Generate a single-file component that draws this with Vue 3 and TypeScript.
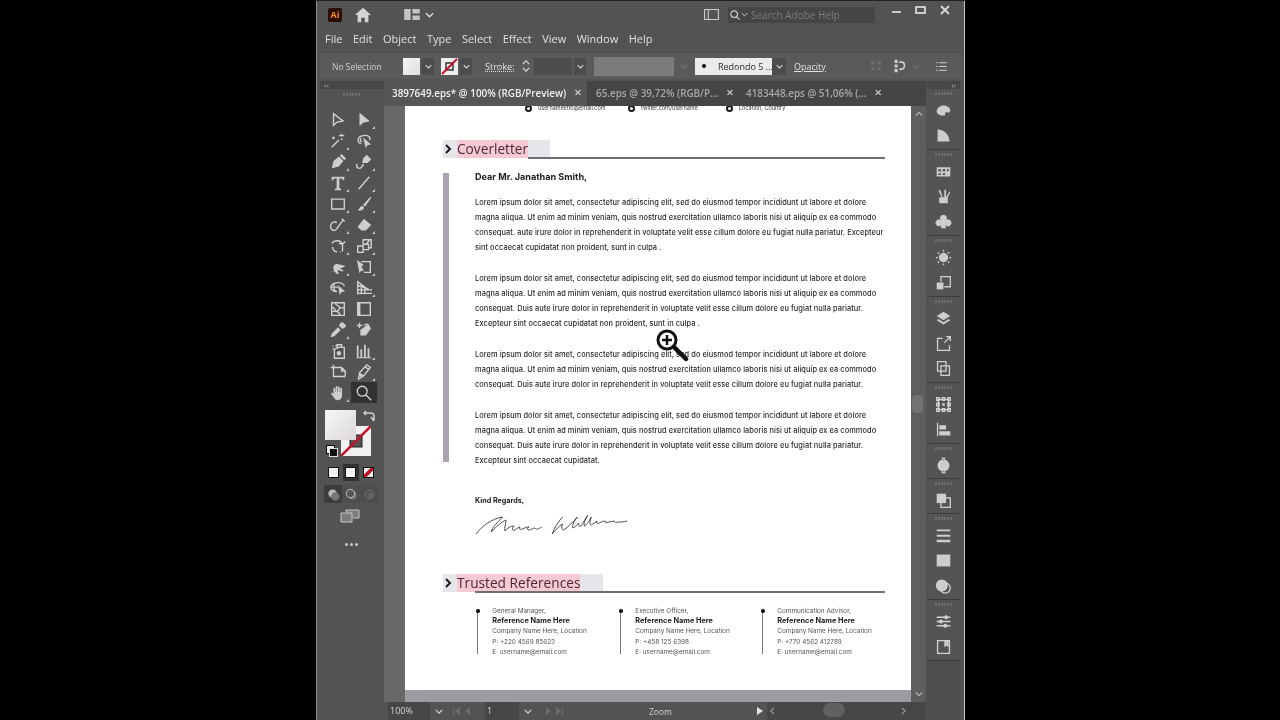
<script setup lang="ts">
interface Icon {
  s?: string
  f?: string
  corner?: boolean
  active?: boolean
}

const menus = ['File', 'Edit', 'Object', 'Type', 'Select', 'Effect', 'View', 'Window', 'Help']

const tools: Icon[] = [
  { s: 'M5 3v13l3.5-3.5 7-1.5z' },
  { f: 'M5 2v15l4-4 7.5-1.5z', corner: true },
  { s: 'M3 17L11 9M14 2v3M11 4h6M14 7v2M5 5v3M3.5 6.5h3', corner: true },
  { s: 'M7 13C2 12 2 5 9 4c6-1 9 2 7 5M7 7c-2 1-1 4 1 4', f: 'M9 6l9 8-4 .5-2 3.5z' },
  { f: 'M3 17l2-8 6-5 5 5-5 6zM12 3l2-2 5 5-2 2z', corner: true },
  { s: 'M2 12c-1 5 3 6 5 4 2-2 1-3 3-3', f: 'M8 11l1-5 4-4 5 5-4 4z', corner: true },
  { f: 'M3 3h14v4h-1.500c-.3-1.500-1-2-2.500-2h-1.500v10c0 1 .6 1.300 2 1.400V18H6.500v-1.600c1.400-.1 2-.4 2-1.400V5H7C5.500 5 4.800 5.500 4.500 7H3z', corner: true },
  { s: 'M4 17L16 3', corner: true },
  { s: 'M3 4.500h14v11H3z', corner: true },
  { f: 'M17 2l1 1-7 10-2-2zM8 12l2 2c0 3-4 4-7 3 2-1 2-4 5-5z', corner: true },
  { s: 'M16 4L8 15M14.500 3l3 3M7.700 15.500c-3 1.500-6-.5-6-4 0-4 4-6 7-4', corner: true },
  { f: 'M10 3l8 7-6 6H7l-4-4z', corner: true },
  { s: 'M3 7c3-4 10-4 12 1v8M15 8l3-3M15 8l-4-1M4 11c0 3 2 5 5 5.500M12 16.500l1 0', corner: true },
  { s: 'M9 8h6v6H9zM3 10h6v7H3zM9 8V3h9v9h-3M12 8l4-4', corner: true },
  { f: 'M2 15c3 1 4-1 3-3-1-3 2-6 5-5 3 0 5 2 8 1-1 3-4 3-6 3 2 1 3 3 5 3-2 2-5 0-7-1-1 2 1 3 1 5-4 0-4-3-5-3z', corner: true },
  { f: 'M2 2l8 6-3 1 3 6-3-1-2 3z', s: 'M7 4h10v12H10M17 4v12', corner: true },
  { s: 'M2 9c0-3 4-5 8-5s7 2 7 4M2 9c0 3 3 5 7 5M2 9h8M6 4.500c-1 3-1 7 1 9', f: 'M10 7l8 7-4 .5-2 3.500z' },
  { s: 'M3 2v15M3 3l8 6v8M3 7l12 4M3 12h16M3 16h16M7 5v12', corner: true },
  { s: 'M3 3h14v14H3zM3 8c4 0 3 4 6 5s3 4 3 4M7 3c0 3 3 3 5 5s5 0 5 0M3 13c2 0 3-2 6 0M12 8c0 2-1 3-3 5' },
  { f: 'M3 3h3v14H3z', s: 'M3 3h14v14H3z' },
  { f: 'M2 18l1-4 7-7 3 3-7 7zM11 5l2-3c1-1 2-1 3 0l2 2c1 1 1 2 0 3l-3 2z', corner: true },
  { s: 'M2 5l6 0M5 2v6M10 5c3-3 6-1 5 2l-3 1', f: 'M6 10l8-6 4 4-6 8H6z' },
  { s: 'M8 3v2M4 5h1M4 8h1M11 6h6v12H6V8l5-2zM9 3h5v3H9z', f: 'M11 10a2.500 2.500 0 1 0 .01 0z' },
  { f: 'M2 4h2v13H2zM6 8h2v9H6zM10 3h2v14h-2zM14 7h2v10h-2zM2 17h16v1H2z', corner: true },
  { s: 'M5 2v13h13M2 5h12l4 4v6M14 5v4h4' },
  { s: 'M4 18l1-7 8-9 4 3-7 9zM11 4l4 3', f: 'M5 14l1-3 4 3-3 2z', corner: true },
  { f: 'M5 11V5c0-1 2-1 2 0v4h.5V3c0-1 2-1 2 0v6h.5V3.500c0-1 2-1 2 0V9h.5V5c0-1 2-1 2 0v8c0 3-2 5-5 5-2 0-3-1-4-3l-3-4c-1-1 .5-2 1.500-1z', corner: true },
  { s: 'M8 8m-5.500 0a5.500 5.500 0 1 0 11 0a5.500 5.500 0 1 0-11 0M12 12l6 6', active: true },
]

const panelGroups: Icon[][] = [
  [
    { f: 'M10 4c5 0 8 3 8 6 0 2-2 3-4 2-2 0-3 1-2 2 0 2-1 2-3 2-4 0-7-2-7-5 0-4 4-7 8-7z' },
    { f: 'M3 3c8 0 14 6 14 14H3z' },
  ],
  [
    { f: 'M2 5h16v11H2zM4 7v3h3V7zM9 7v3h3V7zM14 7v3h2V7zM4 12v2h3v-2zM9 12v2h3v-2z' },
    { f: 'M5 11h10v7H5zM8 11L4 3l2-1 3 8zM11 11V2h2v9zM13 11l4-7 1 1-3 6z' },
    { f: 'M10 2a4 4 0 0 1 3.500 6 4 4 0 1 1-1 6.500L13 18H7l.5-3.500a4 4 0 1 1-1-6.500A4 4 0 0 1 10 2z' },
  ],
  [
    { f: 'M10 4.500a5.500 5.500 0 1 0 .01 0zM10 1a1 1 0 1 0 .01 0zM10 17a1 1 0 1 0 .01 0zM2 9a1 1 0 1 0 .01 0zM18 9a1 1 0 1 0 .01 0zM4 3.500a1 1 0 1 0 .01 0zM16 3.500a1 1 0 1 0 .01 0zM4 14.500a1 1 0 1 0 .01 0zM16 14.500a1 1 0 1 0 .01 0z' },
    { s: 'M7 9V3h11v12h-7', f: 'M2 10h8v8H2z' },
  ],
  [
    { f: 'M10 2l8 5-8 5-8-5zM4 10.500l6 3.800 6-3.800 2 1.500-8 5-8-5z' },
    { s: 'M9 4H3v14h14v-6M11 9l7-7M13 2h5v5' },
    { s: 'M3 2h10v11H3zM7 7h10v11H7z' },
  ],
  [
    { s: 'M4 4h12v12H4z M2 2h3v3H2zM15 2h3v3h-3zM2 15h3v3H2zM15 15h3v3h-3zM8.500 2h3v3h-3zM8.500 15h3v3h-3zM2 8.500h3v3H2zM15 8.500h3v3h-3z', f: 'M8.500 8.500h3v3h-3z' },
    { s: 'M3 2v16', f: 'M5 5h8v5H5zM5 12h13v5H5z' },
  ],
  [{ f: 'M10 3a7 7 0 1 0 .01 0zM7 1h6l-3 3zM7 19h6l-3-3z' }],
  [{ s: 'M7 7h11v11H7z', f: 'M2 2h11v11H2z' }],
  [
    { f: 'M2 3h16v2H2zM2 9h16v2.500H2zM2 15h16v3H2z' },
    { f: 'M2 3h16v14H2z' },
    { f: 'M8 3a7 7 0 1 0 .01 0z', s: 'M12 7a6 6 0 1 0 .01 0z' },
  ],
  [
    { s: 'M2 5h16M2 10h16M2 15h16M13 3.500a1.500 1.500 0 1 0 .01 0zM7 8.500a1.500 1.500 0 1 0 .01 0zM12 13.500a1.500 1.500 0 1 0 .01 0z' },
    { s: 'M3 3h14v15H3z', f: 'M11 3h5v8l-2.500-2-2.500 2z' },
  ],
]

const paragraphs: string[][] = [
  [
    'Lorem ipsum dolor sit amet, consectetur adipiscing elit, sed do eiusmod tempor incididunt ut labore et dolore',
    'magna aliqua. Ut enim ad minim veniam, quis nostrud exercitation ullamco laboris nisi ut aliquip ex ea commodo',
    'consequat. aute irure dolor in reprehenderit in voluptate velit esse cillum dolore eu fugiat nulla pariatur. Excepteur',
    'sint occaecat cupidatat non proident, sunt in culpa .',
  ],
  [
    'Lorem ipsum dolor sit amet, consectetur adipiscing elit, sed do eiusmod tempor incididunt ut labore et dolore',
    'magna aliqua. Ut enim ad minim veniam, quis nostrud exercitation ullamco laboris nisi ut aliquip ex ea commodo',
    'consequat. Duis aute irure dolor in reprehenderit in voluptate velit esse cillum dolore eu fugiat nulla pariatur.',
    'Excepteur sint occaecat cupidatat non proident, sunt in culpa .',
  ],
  [
    'Lorem ipsum dolor sit amet, consectetur adipiscing elit, sed do eiusmod tempor incididunt ut labore et dolore',
    'magna aliqua. Ut enim ad minim veniam, quis nostrud exercitation ullamco laboris nisi ut aliquip ex ea commodo',
    'consequat. Duis aute irure dolor in reprehenderit in voluptate velit esse cillum dolore eu fugiat nulla pariatur.',
  ],
  [
    'Lorem ipsum dolor sit amet, consectetur adipiscing elit, sed do eiusmod tempor incididunt ut labore et dolore',
    'magna aliqua. Ut enim ad minim veniam, quis nostrud exercitation ullamco laboris nisi ut aliquip ex ea commodo',
    'consequat. Duis aute irure dolor in reprehenderit in voluptate velit esse cillum dolore eu fugiat nulla pariatur.',
    'Excepteur sint occaecat cupidatat.',
  ],
]

const references = [
  { role: 'General Manager,', phone: 'P: +220 4569 85623' },
  { role: 'Executive Officer,', phone: 'P: +458 125 6398' },
  { role: 'Communication Advisor,', phone: 'P: +770 4562 412789' },
]
</script>

<template>
  <div class="stage">
    <div class="window">
      <header class="titlebar">
        <div class="ai-logo">Ai</div>
        <svg class="home" viewBox="0 0 20 20"><path d="M10 2l9 8h-3v8h-4v-5H8v5H4v-8H1z" /></svg>
        <svg class="workspace-icon" viewBox="0 0 17 12"><path d="M0 0h7v12H0zM9 0h8v5H9zM9 7h8v5H9z" /></svg>
        <svg class="chev top-chev" viewBox="0 0 10 6"><path d="M1 1l4 4 4-4" /></svg>
        <div class="title-spacer"></div>
        <svg class="arrange" viewBox="0 0 16 12"><path d="M.5.5h15v11H.5zM.5.5h4v11h-4z" /></svg>
        <div class="search">
          <svg viewBox="0 0 12 12"><path d="M5 1a4 4 0 1 0 .01 0zM8 8l3.500 3.500" /></svg>
          <svg class="search-chev" viewBox="0 0 10 6"><path d="M1 1l4 4 4-4" /></svg>
          <span>Search Adobe Help</span>
        </div>
        <div class="win-btns">
          <i class="win-min"></i>
          <i class="win-max"></i>
          <svg viewBox="0 0 10 10"><path d="M1 1l8 8M9 1l-8 8" /></svg>
        </div>
      </header>

      <nav class="menubar">
        <span v-for="m in menus" :key="m">{{ m }}</span>
      </nav>

      <section class="controlbar">
        <span class="no-sel">No Selection</span>
        <div class="swatch fill-swatch"></div>
        <div class="drop"><svg class="chev" viewBox="0 0 10 6"><path d="M1 1l4 4 4-4" /></svg></div>
        <div class="swatch stroke-swatch">
          <svg viewBox="0 0 17 17"><rect x="5" y="5" width="7" height="7" fill="none" stroke="#333" stroke-width="1.500" /><path d="M1 16L16 1" stroke="#c4122a" stroke-width="2" /></svg>
        </div>
        <div class="drop"><svg class="chev" viewBox="0 0 10 6"><path d="M1 1l4 4 4-4" /></svg></div>
        <span class="stroke-label">Stroke:</span>
        <div class="spinner">
          <svg class="chev" viewBox="0 0 10 6"><path d="M1 5l4-4 4 4" /></svg>
          <svg class="chev" viewBox="0 0 10 6"><path d="M1 1l4 4 4-4" /></svg>
        </div>
        <div class="stroke-field"></div>
        <div class="drop"><svg class="chev" viewBox="0 0 10 6"><path d="M1 1l4 4 4-4" /></svg></div>
        <div class="dash-field"></div>
        <svg class="chev dim-chev" viewBox="0 0 10 6"><path d="M1 1l4 4 4-4" /></svg>
        <div class="brush"><b class="brush-dot"></b><span>Redondo 5 ...</span></div>
        <div class="drop brush-drop"><svg class="chev" viewBox="0 0 10 6"><path d="M1 1l4 4 4-4" /></svg></div>
        <span class="opacity-label">Opacity</span>
        <svg class="ctrl-align" viewBox="0 0 16 14"><path d="M1 1h5v4H1zM10 1h5v4h-5zM1 9h5v4H1zM10 9h5v4h-5z" /></svg>
        <svg class="ctrl-dist" viewBox="0 0 16 18"><path d="M1 1h4v4H1zM1 7h4v4H1zM1 13h4v4H1z" fill="#cfcfcf" /><path d="M7 4h3c5 0 5 9 0 9H7" fill="none" stroke="#cfcfcf" stroke-width="2" /></svg>
        <svg class="chev dim-chev2" viewBox="0 0 10 6"><path d="M1 1l4 4 4-4" /></svg>
        <svg class="ctrl-list" viewBox="0 0 14 12"><path d="M0 1h2M4 1h10M0 6h2M4 6h10M0 11h2M4 11h10" /></svg>
      </section>

      <div class="workspace">
        <aside class="toolbar">
          <div class="collapse">‹‹</div>
          <div class="grip"></div>
          <div class="tool-grid">
            <div v-for="(t, i) in tools" :key="i" class="tool" :class="{ active: t.active }">
              <svg viewBox="0 0 20 20">
                <path v-if="t.f" :d="t.f" class="fillp" />
                <path v-if="t.s" :d="t.s" class="strokep" />
              </svg>
              <i v-if="t.corner" class="corner"></i>
            </div>
          </div>
          <div class="colors">
            <div class="big-stroke">
              <svg viewBox="0 0 30 30"><rect x="9" y="9" width="12" height="12" fill="#555" stroke="#222" stroke-width="1" /><path d="M0 30L30 0" stroke="#c4122a" stroke-width="2.500" /></svg>
            </div>
            <div class="big-fill"></div>
            <svg class="swap" viewBox="0 0 12 12"><path d="M1 3h7c2 0 3 1 3 3v4M8 7l3 4" /><path d="M3 1L1 3l2 2" /></svg>
            <div class="default-a"></div>
            <div class="default-b"></div>
          </div>
          <div class="mode-row">
            <div class="mode-btn"><i class="white-box"></i></div>
            <div class="mode-btn dark"><i class="white-box"></i></div>
            <div class="mode-btn"><i class="none-box"></i></div>
          </div>
          <div class="draw-row">
            <div class="draw-btn sel"><svg viewBox="0 0 14 14"><circle cx="6" cy="6" r="4.500" fill="#bbb" /><circle cx="9" cy="9" r="4.500" fill="#777" /></svg></div>
            <div class="draw-btn"><svg viewBox="0 0 14 14"><circle cx="8" cy="8" r="4.500" fill="#777" /><circle cx="6" cy="6" r="4.500" fill="#555" stroke="#ccc" /></svg></div>
            <div class="draw-btn faint"><svg viewBox="0 0 14 14"><circle cx="7" cy="7" r="4.500" fill="none" stroke="#777" /><circle cx="8" cy="8" r="2.500" fill="#666" /></svg></div>
          </div>
          <svg class="screen-mode" viewBox="0 0 20 14"><path d="M6 3V1h13v8h-6M1 4h11v9H1z" /></svg>
          <div class="more-dots"><i></i><i></i><i></i></div>
        </aside>

        <main class="center">
          <div class="tabs">
            <div class="tab active-tab">3897649.eps* @ 100% (RGB/Preview)<em>×</em></div>
            <div class="tab second">65.eps @ 39,72% (RGB/P...<em>×</em></div>
            <div class="tab third">4183448.eps @ 51,06% (...<em>×</em></div>
          </div>

          <div class="canvas-row">
            <div class="gutter"></div>
            <div class="page-col">
              <article class="page">
                <div class="contacts">
                  <span class="contact c1"><i></i>usernameinfo@email.com</span>
                  <span class="contact c2"><i></i>twitter.com/username</span>
                  <span class="contact c3"><i></i>Location, Country</span>
                </div>

                <div class="sec-head">
                  <div class="sec-label cover-label">
                    <svg viewBox="0 0 8 10"><path d="M2 1l4 4-4 4" /></svg>
                    <span class="sec-title">Coverletter</span>
                  </div>
                  <div class="sec-line cover-line"></div>
                </div>

                <div class="letter">
                  <div class="letter-bar"></div>
                  <div class="letter-body">
                    <h2>Dear Mr. Janathan Smith,</h2>
                    <p v-for="(para, i) in paragraphs" :key="i">
                      <span v-for="(line, j) in para" :key="j">{{ line }}</span>
                    </p>
                  </div>
                </div>

                <div class="regards">Kind Regards,</div>
                <svg class="signature" viewBox="0 0 132 22" preserveAspectRatio="none">
                  <path d="M1 20C6 12 14 5 24 3c-4 5-9 10-10 15 4-5 9-10 13-12 0 4-2 8-1 11 2-3 5-5 8-5-2 2-2 5 0 4 2 0 3-3 5-3-1 2 0 3 2 2 2-1 4-2 6-2-2 1-2 3 0 3 2 0 3-2 5-2 1 2 3 1 6-1M76 3c-4 5-7 11-9 17 3-4 6-8 9-10-1 3-1 6 1 6 4-3 8-8 12-13-3 4-5 9-4 11 2-1 4-3 5-5 0 2 0 4 2 3 2-3 4-8 6-11-2 4-4 9-3 11 2-1 4-5 6-9-1 4-2 8 0 8 2-1 3-3 5-4-1 2 0 3 2 2 2-1 3-2 5-2 0 2 1 2 3 1 2 0 3-1 5-1 0 1 1 2 3 1 3 0 5 0 8-1" />
                </svg>

                <div class="sec-head refs-head">
                  <div class="sec-label refs-label">
                    <svg viewBox="0 0 8 10"><path d="M2 1l4 4-4 4" /></svg>
                    <span class="sec-title">Trusted References</span>
                  </div>
                  <div class="sec-line refs-line"></div>
                </div>

                <div class="refs">
                  <div v-for="r in references" :key="r.role" class="ref">
                    <div class="ref-rule"></div>
                    <div class="ref-text">
                      <span>{{ r.role }}</span>
                      <strong>Reference Name Here</strong>
                      <span>Company Name Here, Location</span>
                      <span>{{ r.phone }}</span>
                      <span>E: username@email.com</span>
                    </div>
                  </div>
                </div>
              </article>
              <div class="page-strip"></div>
            </div>
            <div class="vscroll">
              <svg class="chev" viewBox="0 0 10 6"><path d="M1 5l4-4 4 4" /></svg>
              <div class="vthumb"></div>
              <svg class="chev" viewBox="0 0 10 6"><path d="M1 1l4 4 4-4" /></svg>
            </div>

            <svg class="zoom-cursor" viewBox="0 0 36 38">
              <circle cx="14" cy="14" r="9" fill="#fff" fill-opacity=".75" stroke="#111" stroke-width="3" />
              <path d="M9 14h10M14 9v10" stroke="#111" stroke-width="2.500" />
              <path d="M21 21l12 12" stroke="#111" stroke-width="4.500" stroke-linecap="round" />
            </svg>
          </div>

          <div class="statusbar">
            <div class="zoom-field">100%</div>
            <svg class="chev" viewBox="0 0 10 6"><path d="M1 1l4 4 4-4" /></svg>
            <svg class="nav nav-first" viewBox="0 0 20 8"><path d="M0 0h1v8H0zM7 0v8L2 4zM17 0v8l-5-4z" /></svg>
            <div class="page-field">1</div>
            <svg class="chev" viewBox="0 0 10 6"><path d="M1 1l4 4 4-4" /></svg>
            <svg class="nav nav-last" viewBox="0 0 20 8"><path d="M2 0v8l5-4zM12 0v8l5-4zM18 0h1v8h-1z" /></svg>
            <span class="status-name">Zoom</span>
            <svg class="play" viewBox="0 0 6 8"><path d="M0 0l6 4-6 4z" /></svg>
            <div class="hscroll">
              <svg viewBox="0 0 6 10"><path d="M5 1L1 5l4 4" /></svg>
              <div class="hthumb"></div>
              <svg viewBox="0 0 6 10"><path d="M1 1l4 4-4 4" /></svg>
            </div>
          </div>
        </main>

        <aside class="panels">
          <div class="collapse right">‹‹</div>
          <div v-for="(g, gi) in panelGroups" :key="gi" class="panel-group">
            <div class="grip"></div>
            <div v-for="(ic, ii) in g" :key="ii" class="panel-icon">
              <svg viewBox="0 0 20 20">
                <path v-if="ic.f" :d="ic.f" class="fillp" />
                <path v-if="ic.s" :d="ic.s" class="strokep" />
              </svg>
            </div>
          </div>
        </aside>
      </div>
    </div>
  </div>
</template>

<style>
html,
body {
  margin: 0;
  background: #000;
  overflow: hidden;
}
</style>

<style scoped>
.stage {
  width: 1280px;
  height: 720px;
  background: #000;
  overflow: hidden;
  font-family: 'Open Sans', 'Liberation Sans', sans-serif;
}

.window {
  width: 649px;
  height: 720px;
  margin-left: 316px;
  background: #535353;
  display: flex;
  flex-direction: column;
  filter: blur(0.45px);
  box-sizing: border-box;
  border-top: 1px solid #222;
  box-shadow: inset -1px 0 0 #c8c8c8, inset 1px 0 0 #8a8a8a;
  color: #d6d6d6;
}

svg {
  display: block;
}

.chev {
  width: 9px;
  height: 6px;
  fill: none;
  stroke: #d8d8d8;
  stroke-width: 1.6;
  flex: none;
}

.titlebar {
  height: 27px;
  display: flex;
  align-items: center;
  padding-left: 12px;
  flex: none;
}

.ai-logo {
  width: 14px;
  height: 14px;
  background: #2b0d03;
  color: #f28a1e;
  font-size: 9px;
  font-weight: 700;
  text-align: center;
  line-height: 14px;
  border-radius: 2px;
}

.home {
  width: 18px;
  height: 18px;
  margin-left: 12px;
  fill: #d4d4d4;
}

.workspace-icon {
  width: 16px;
  height: 11px;
  margin-left: 32px;
  fill: #c4c4c4;
}

.top-chev {
  margin-left: 5px;
}

.title-spacer {
  flex: 1;
}

.arrange {
  width: 15px;
  height: 11px;
  fill: none;
  stroke: #cdcdcd;
  stroke-width: 1.2;
}

.search {
  width: 147px;
  height: 16px;
  margin-left: 9px;
  background: #454545;
  display: flex;
  align-items: center;
  padding-left: 2px;
  box-sizing: border-box;
  font-size: 10px;
  color: #7d7d7d;
}

.search svg {
  width: 10px;
  height: 10px;
  fill: none;
  stroke: #d4d4d4;
  stroke-width: 1.4;
}

.search .search-chev {
  width: 7px;
  height: 5px;
  margin: 0 3px 0 1px;
}

.win-btns {
  width: 90px;
  display: flex;
  align-items: center;
  padding: 0 0 10px 17px;
  box-sizing: border-box;
}

.win-min {
  width: 9px;
  height: 2px;
  margin-top: 4px;
  background: #c9c9c9;
}

.win-max {
  width: 7px;
  height: 4px;
  margin-left: 14px;
  border: 2px solid #c9c9c9;
  box-sizing: content-box;
}

.win-btns svg {
  width: 10px;
  height: 10px;
  margin-left: 14px;
  fill: none;
  stroke: #d8d8d8;
  stroke-width: 1.8;
}

.menubar {
  height: 20px;
  display: flex;
  align-items: center;
  gap: 10.5px;
  padding-left: 9px;
  font-size: 11px;
  color: #e0e0e0;
  flex: none;
}

.controlbar {
  height: 27px;
  margin: 4px 4px 0;
  background: #5a5a5a;
  display: flex;
  align-items: center;
  flex: none;
  font-size: 8.500px;
  border-top: 1px solid #4a4a4a;
  box-sizing: border-box;
}

.no-sel {
  margin-left: 12px;
  width: 71px;
  color: #d0d0d0;
}

.swatch {
  width: 17px;
  height: 17px;
}

.fill-swatch {
  background: linear-gradient(135deg, #f6f4f5, #e0dde0);
}

.stroke-swatch {
  background: #eee;
  margin-left: 7px;
}

.drop {
  width: 12px;
  height: 17px;
  margin-left: 2px;
  background: #4c4c4c;
  display: flex;
  align-items: center;
  justify-content: center;
}

.drop .chev {
  width: 7px;
  height: 5px;
}

.stroke-label {
  margin-left: 13px;
  width: 37px;
  text-decoration: underline dotted;
  color: #e2e2e2;
  font-size: 9px;
}

.spinner {
  width: 12px;
  display: flex;
  flex-direction: column;
  gap: 2px;
}

.spinner .chev {
  width: 8px;
  height: 5px;
}

.stroke-field {
  width: 38px;
  height: 17px;
  background: #4c4c4c;
}

.dash-field {
  width: 80px;
  height: 19px;
  margin-left: 8px;
  background: #7b7b7b;
}

.dim-chev {
  margin-left: 6px;
  width: 8px;
  height: 5px;
  stroke: #777;
}

.brush {
  width: 77px;
  height: 17px;
  margin-left: 7px;
  background: #ebebeb;
  color: #2a2a2a;
  display: flex;
  align-items: center;
  font-size: 9px;
  white-space: nowrap;
}

.brush-dot {
  width: 4px;
  height: 4px;
  border-radius: 50%;
  background: #000;
  margin: 0 12px 0 7px;
  flex: none;
}

.brush-drop {
  margin-left: 0;
  width: 14px;
}

.opacity-label {
  margin-left: 8px;
  text-decoration: underline;
  color: #e2e2e2;
  font-size: 9px;
}

.ctrl-align {
  width: 12px;
  height: 10px;
  margin-left: 44px;
  fill: #6f6f6f;
}

.ctrl-dist {
  width: 14px;
  height: 14px;
  margin-left: 11px;
}

.dim-chev2 {
  margin-left: 5px;
  width: 7px;
  height: 5px;
  stroke: #777;
}

.ctrl-list {
  width: 11px;
  height: 9px;
  margin-left: 17px;
  fill: none;
  stroke: #cfcfcf;
  stroke-width: 1.4;
}

.workspace {
  flex: 1;
  min-height: 0;
  display: flex;
  padding-left: 4px;
  margin-top: 2px;
}

.toolbar {
  width: 64px;
  flex: none;
  display: flex;
  flex-direction: column;
  background: #535353;
}

.collapse {
  height: 8px;
  line-height: 8px;
  font-size: 8px;
  background: #474747;
  padding-left: 4px;
  color: #b5b5b5;
}

.collapse.right {
  text-align: right;
  padding-right: 4px;
}

.grip {
  height: 3px;
  width: 18px;
  margin: 4px auto 4px;
  background: repeating-linear-gradient(90deg, #6c6c6c 0 2px, transparent 2px 3px);
}

.tool-grid {
  display: grid;
  grid-template-columns: 26px 26px;
  grid-auto-rows: 21px;
  padding-left: 5px;
  margin-top: 9px;
}

.tool {
  position: relative;
  display: flex;
  align-items: center;
  justify-content: center;
}

.tool svg {
  width: 18px;
  height: 18px;
}

.panel-icon svg {
  width: 17px;
  height: 17px;
}

.fillp {
  fill: #cdcdcd;
  fill-rule: evenodd;
}

.strokep {
  fill: none;
  stroke: #d2d2d2;
  stroke-width: 1.5;
}

.tool.active {
  background: #323232;
}

.corner {
  position: absolute;
  right: 2px;
  bottom: 1px;
  width: 0;
  height: 0;
  border-left: 3px solid transparent;
  border-bottom: 3px solid #c4c4c4;
}

.colors {
  position: relative;
  height: 47px;
  margin: 7px 0 0 5px;
}

.big-fill {
  position: absolute;
  left: 0;
  top: 0;
  width: 31px;
  height: 30px;
  background: linear-gradient(135deg, #f8f6f7, #dcd8dc);
}

.big-stroke {
  position: absolute;
  left: 16px;
  top: 16px;
  width: 30px;
  height: 30px;
  background: #f2f2f2;
}

.swap {
  position: absolute;
  left: 38px;
  top: 0;
  width: 12px;
  height: 12px;
  fill: none;
  stroke: #d0d0d0;
  stroke-width: 1.5;
}

.default-a,
.default-b {
  position: absolute;
  width: 7px;
  height: 7px;
  border: 1px solid #111;
}

.default-a {
  left: 1px;
  top: 35px;
  background: #eee;
}

.default-b {
  left: 4px;
  top: 38px;
  background: #111;
  border-color: #ddd;
}

.mode-row {
  display: flex;
  margin: 7px 0 0 5px;
  gap: 1px;
}

.mode-btn {
  width: 16.500px;
  height: 17px;
  display: flex;
  align-items: center;
  justify-content: center;
}

.mode-btn.dark {
  background: #323232;
}

.white-box,
.none-box {
  width: 9px;
  height: 9px;
  background: #f2f2f2;
  border: 1px solid #111;
  box-sizing: content-box;
}

.none-box {
  background: linear-gradient(135deg, #eee 38%, #c4122a 38% 62%, #eee 62%);
}

.draw-row {
  display: flex;
  margin: 4px 0 0 4px;
}

.draw-btn {
  width: 18px;
  height: 18px;
  display: flex;
  align-items: center;
  justify-content: center;
  background: #4e4e4e;
}

.draw-btn svg {
  width: 13px;
  height: 13px;
}

.draw-btn.sel {
  background: #3d3d3d;
}

.screen-mode {
  width: 20px;
  height: 14px;
  margin: 6px 0 0 20px;
  fill: #7c7c7c;
  stroke: #c8c8c8;
  stroke-width: 1;
}

.more-dots {
  display: flex;
  gap: 2px;
  margin: 20px 0 0 25px;
}

.more-dots i {
  width: 3px;
  height: 3px;
  border-radius: 50%;
  background: #c8c8c8;
}

.center {
  width: 542px;
  flex: none;
  display: flex;
  flex-direction: column;
  min-height: 0;
}

.tabs {
  height: 25px;
  flex: none;
  display: flex;
  background: #454545;
  font-size: 9.900px;
  font-weight: 600;
  line-height: 23px;
  white-space: nowrap;
  color: #a9a9a9;
}

.tab em {
  font-style: normal;
  font-size: 13px;
  color: #d2d2d2;
  margin-left: 8px;
}

.active-tab {
  width: 203px;
  background: #565656;
  color: #f0f0f0;
  padding-left: 8px;
  box-sizing: border-box;
}

.second {
  width: 150px;
  padding-left: 9px;
  box-sizing: border-box;
}

.third {
  padding-left: 9px;
}

.canvas-row {
  flex: 1;
  min-height: 0;
  display: flex;
  position: relative;
}

.gutter {
  width: 21px;
  flex: none;
  background: #686868;
}

.page-col {
  width: 506px;
  flex: none;
  display: flex;
  flex-direction: column;
  min-height: 0;
}

.page {
  flex: 1;
  min-height: 0;
  overflow: hidden;
  background: #fff;
  padding-left: 38px;
  font-family: Inter, 'Liberation Sans', sans-serif;
  color: #222;
}

.page-strip {
  height: 12px;
  flex: none;
  background: #9d9aa4;
}

.vscroll {
  width: 15px;
  flex: none;
  background: #5e5e5e;
  display: flex;
  flex-direction: column;
  align-items: center;
  justify-content: space-between;
  padding: 5px 0 5px;
  box-sizing: border-box;
  position: relative;
}

.vthumb {
  position: absolute;
  left: 1px;
  top: 289px;
  width: 11px;
  height: 18px;
  background: #727272;
  border-radius: 4px;
}

.vscroll .chev {
  stroke: #b5b5b5;
  width: 8px;
}

.zoom-cursor {
  position: absolute;
  left: 269px;
  top: 220px;
  width: 36px;
  height: 38px;
  filter: blur(0.5px);
}

.contacts {
  height: 6px;
  position: relative;
  font-size: 5.500px;
  line-height: 6px;
  color: #333;
}

.contact {
  position: absolute;
  top: -1.500px;
  display: flex;
  align-items: center;
  white-space: nowrap;
}

.contact i {
  width: 7px;
  height: 7px;
  border-radius: 50%;
  border: 2.500px solid #1c1c1c;
  box-sizing: border-box;
  margin-right: 6px;
}

.c1 { left: 82px; }
.c2 { left: 185px; }
.c3 { left: 283px; }

.sec-head {
  width: 442px;
  display: flex;
  align-items: flex-end;
  margin-top: 28px;
}

.sec-label {
  height: 18px;
  background: #e6e5ea;
  display: flex;
  align-items: center;
  padding-left: 1px;
  box-sizing: border-box;
  flex: none;
  position: relative;
}

.sec-label svg {
  width: 8px;
  height: 10px;
  fill: none;
  stroke: #1b1b1b;
  stroke-width: 2;
  flex: none;
}

.sec-title {
  margin-left: 5px;
  height: 18px;
  line-height: 18px;
  background: #f6c9d3;
  font-family: 'Open Sans', sans-serif;
  font-size: 13.700px;
  color: #4a2a3a;
  white-space: nowrap;
}

.cover-label {
  width: 107px;
}

.refs-label {
  width: 160px;
}

.sec-line {
  flex: 1;
  height: 2px;
  background: #6f6d72;
  position: relative;
  margin-bottom: -1px;
}

.cover-line {
  margin-left: -22px;
}

.refs-line {
  margin-left: -128px;
}

.letter {
  display: flex;
  align-items: flex-start;
  margin-top: 11px;
}

.letter-bar {
  width: 6px;
  height: 289px;
  margin-top: 4px;
  background: #a9a4ad;
  flex: none;
}

.letter-body {
  margin-left: 26px;
  white-space: nowrap;
}

.letter-body h2 {
  margin: 0 0 10.500px;
  font-size: 9.100px;
  line-height: 15.200px;
  font-weight: 700;
  color: #222;
}

.letter-body p {
  margin: 0 0 15.200px;
  font-size: 7.400px;
  line-height: 15.200px;
  font-weight: 500;
  color: #2b2b2b;
  letter-spacing: 0.07px;
}

.letter-body p span {
  display: block;
}

.letter-body p:last-child {
  margin-bottom: 0;
}

.regards {
  margin: 25px 0 0 32px;
  font-size: 7.200px;
  line-height: 15px;
  font-weight: 700;
}

.signature {
  width: 152px;
  height: 22px;
  margin: 6px 0 0 32px;
  fill: none;
  stroke: #333;
  stroke-width: 0.8;
}

.refs-head {
  margin-top: 38px;
}

.refs {
  display: flex;
  margin: 17px 0 0 34px;
}

.ref {
  width: 143px;
  display: flex;
  flex: none;
}

.ref:nth-child(2) {
  width: 142px;
}

.ref-rule {
  width: 1.300px;
  height: 42px;
  margin-top: 3px;
  background: #777;
  position: relative;
  flex: none;
}

.ref-rule::before {
  content: '';
  position: absolute;
  left: -1px;
  top: -3px;
  width: 3.500px;
  height: 3.500px;
  border-radius: 50%;
  background: #111;
}

.ref-text {
  margin: -3.500px 0 0 14px;
  display: flex;
  flex-direction: column;
  font-size: 6.400px;
  line-height: 10.300px;
  color: #555;
  white-space: nowrap;
}

.ref-text strong {
  font-size: 7.300px;
  color: #1d1d1d;
  font-weight: 700;
}

.statusbar {
  height: 18px;
  flex: none;
  display: flex;
  align-items: center;
  background: #535353;
  font-size: 9px;
  color: #d4d4d4;
}

.statusbar .chev {
  width: 8px;
  height: 5px;
  margin-left: 5px;
}

.zoom-field {
  width: 42px;
  height: 100%;
  margin-left: 4px;
  padding-left: 2px;
  box-sizing: border-box;
  background: #474747;
  line-height: 18px;
}

.nav {
  height: 8px;
  width: 20px;
  fill: #6e6e6e;
  flex: none;
}

.nav-first {
  margin: 0 12px 0 10px;
}

.page-field {
  width: 34px;
  height: 100%;
  background: #474747;
  line-height: 18px;
  padding-left: 2px;
  box-sizing: border-box;
}

.nav-last {
  margin-left: 12px;
}

.status-name {
  margin-left: 85px;
  width: 108px;
  font-size: 8.500px;
}

.play {
  width: 6px;
  height: 8px;
  fill: #e6e6e6;
  flex: none;
}

.hscroll {
  flex: 1;
  margin-left: 4px;
  height: 100%;
  background: #474747;
  display: flex;
  align-items: center;
  justify-content: space-between;
  position: relative;
  padding: 0 20px 0 3px;
  box-sizing: border-box;
}

.hscroll svg {
  width: 5px;
  height: 8px;
  fill: none;
  stroke: #a8a8a8;
  stroke-width: 1.300;
}

.hthumb {
  position: absolute;
  left: 56px;
  top: 1px;
  width: 22px;
  height: 14px;
  background: #606060;
  border-radius: 7px;
}

.panels {
  width: 33px;
  flex: none;
  margin-left: 1px;
  display: flex;
  flex-direction: column;
  background: #4f4f4f;
}

.panel-group {
  border-bottom: 1px solid #3c3c3c;
  box-sizing: border-box;
  background: #545454;
  padding-bottom: 1px;
}

.panel-group:nth-child(7),
.panel-group:nth-child(8) {
  padding-bottom: 0;
}

.panel-group .grip {
  margin: 3px auto;
}

.panel-icon {
  height: 25px;
  display: flex;
  align-items: center;
  justify-content: center;
}
</style>
